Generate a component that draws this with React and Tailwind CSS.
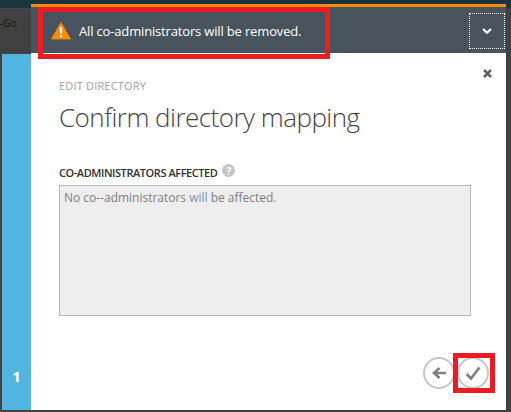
function WarningIcon() {
  return (
    <svg className="-mt-[3px] h-[18px] w-5 shrink-0" viewBox="0 0 20 18">
      <path d="M10 .7 19.6 17H.4Z" fill="#ff8c00" stroke="#ff8c00" strokeWidth=".8" strokeLinejoin="round" />
      <path d="M8.7 5.2h2.6l-.3 6.6H9zM8.9 13h2.2v2.2H8.9z" fill="#fff" />
    </svg>
  );
}

function NotificationBar() {
  return (
    <header className="flex h-[49px] border-t-3 border-[#ff8c00] bg-[#48535e]">
      <div className="ml-[7px] flex h-[52px] w-[292px] shrink-0 border-5 border-[#ed1c24]">
        <div className="flex h-[42px] w-full shrink-0 items-center border-b border-white pl-2 text-white">
          <WarningIcon />
          <span className="-mt-[2px] ml-2 whitespace-nowrap text-[13px] tracking-[-0.16px]">All co-administrators will be removed.</span>
        </div>
      </div>
      <button className="mt-[6px] mr-px ml-auto flex h-9 w-9 items-center justify-center border border-dotted border-white">
        <svg className="h-2 w-[10px]" viewBox="0 0 10 8" fill="none" stroke="#fff" strokeWidth="2.2">
          <path d="m1 2 4 3.8L9 2" />
        </svg>
      </button>
    </header>
  );
}

function RoundButton({ children }) {
  return (
    <button className="flex h-8 w-8 shrink-0 items-center justify-center rounded-full border-2 border-[#c6c6c6] bg-white">
      {children}
    </button>
  );
}

export default function App() {
  return (
    <div className="flex h-[412px] w-[511px] flex-col overflow-hidden bg-[#414141] font-['Open_Sans','Noto_Sans',sans-serif]">
      <div className="h-1 shrink-0 bg-[#1b333c]" />
      <div className="flex h-[406px]">
        <aside className="flex w-[31px] shrink-0 flex-col">
          <div className="h-[50px] border-t-4 border-[#1b333c]">
            <div className="border-t border-[#344b52] pt-[6px] text-[10px] leading-4 whitespace-nowrap text-[#111]">-Go</div>
          </div>
          <div className="ml-[2px] flex flex-1 items-end justify-center bg-[#52b5e0] pb-6 text-[15px] leading-5 font-bold text-white">1</div>
        </aside>
        <main className="flex w-[475px] shrink-0 flex-col bg-white">
          <NotificationBar />
          <div className="flex flex-1 flex-col pr-[11px] pl-7">
            <div className="flex h-[46px] justify-between">
              <h2 className="mt-[25px] text-[11px] leading-4 tracking-[0.18px] text-[#a0a0a0]">EDIT DIRECTORY</h2>
              <svg className="mt-4 mr-[3px] h-[9px] w-[9px]" viewBox="0 0 9 9" stroke="#606060" strokeWidth="2.5">
                <path d="m1 1 7 7M8 1 1 8" />
              </svg>
            </div>
            <h1 className="h-[65px] whitespace-nowrap text-[26px] leading-9 font-light tracking-[-0.52px] text-[#444]">Confirm directory mapping</h1>
            <div className="flex h-[21px]">
              <h3 className="mt-[1px] whitespace-nowrap text-[11px] leading-4 font-semibold tracking-[-0.44px] text-[#303030]">CO-ADMINISTRATORS AFFECTED</h3>
              <span className="ml-[5px] flex h-[13px] w-[13px] items-center justify-center rounded-full bg-[#c6c6c6] text-[10px] leading-none font-bold text-white">?</span>
            </div>
            <div className="h-[131px] w-[412px] border border-[#b5b8b5] bg-[#eee] pt-1 pl-1 text-[12px] leading-4 tracking-[-0.01px] text-[#808080]">
              No co--administrators <span className="text-[#7894b0]">will</span> be affected.
            </div>
            <div className="mt-[37px] flex h-10 items-center justify-end">
              <RoundButton>
                <svg className="h-4 w-4" viewBox="0 0 16 16" fill="none" stroke="#808080" strokeWidth="2.6">
                  <path d="M15 8H3M8.5 3 3 8l5.5 5" />
                </svg>
              </RoundButton>
              <div className="-ml-[2px] flex h-10 w-[42px] items-center border-5 border-[#ed1c24]">
                <div className="flex h-[30px] w-8 shrink-0 items-center justify-center overflow-hidden">
                  <div className="-ml-[2px] flex">
                    <RoundButton>
                      <svg className="h-4 w-4 shrink-0" viewBox="0 0 16 16" fill="none" stroke="#808080" strokeWidth="2.8">
                        <path d="m1.5 9 4.5 4.5L14.5 2.5" />
                      </svg>
                    </RoundButton>
                  </div>
                </div>
              </div>
            </div>
          </div>
        </main>
        <div className="w-[5px] border-t-4 border-[#1b333c]" />
      </div>
    </div>
  );
}
